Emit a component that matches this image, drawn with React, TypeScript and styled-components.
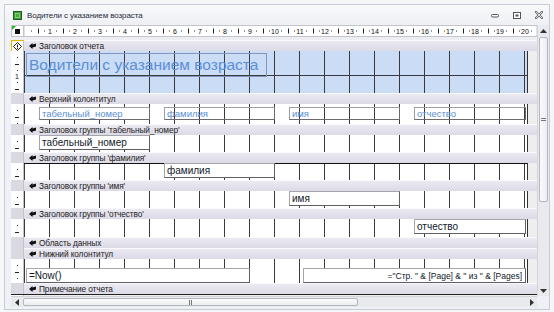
import React from 'react';
import styled, { createGlobalStyle } from 'styled-components';

const GlobalStyle = createGlobalStyle`
  html, body { margin: 0; padding: 0; background: #f5f6f8; }
  body { font-family: "Liberation Sans", Arial, sans-serif; }
  #root { width: 554px; height: 312px; overflow: hidden; }
`;

const Window = styled.div`
  margin: 4px 0 0 4px;
  width: 544px;
  height: 304px;
  border: 1px solid #c6ccd6;
  background: #eef1f5;
  display: grid;
  grid-template-columns: 6px 13px 513px 12px;
  grid-template-rows: 20px 271px 11px 2px;
`;

const TitleBar = styled.div`
  grid-column: 1 / -1;
  display: flex;
  align-items: center;
  padding-left: 8px;
  background: linear-gradient(#f8f9fb, #eef0f4);
`;

const TitleText = styled.span`
  margin-left: 5px;
  font-size: 8px;
  color: #1e2a3a;
  letter-spacing: -0.1px;
`;

const TitleButtons = styled.div`
  margin-left: auto;
  display: flex;
  align-items: center;
  gap: 14px;
  padding-right: 6px;
`;

const Main = styled.div`
  grid-column: 2 / 4;
  grid-row: 2;
  display: flex;
  flex-direction: column;
  overflow: hidden;
`;

const RulerRow = styled.div`
  display: grid;
  grid-template-columns: 13px 513px;
  height: 12px;
`;

const Corner = styled.div`
  position: relative;
  background: #fff;
  border: 1px solid #c4c4cc;
  box-sizing: border-box;
  display: flex;
  align-items: center;
  justify-content: center;
  &::before {
    content: '';
    position: absolute;
    left: 0;
    top: 0;
    border-top: 4px solid #1fb81f;
    border-right: 4px solid transparent;
  }
`;

const CornerSquare = styled.div`
  width: 5px;
  height: 5px;
  background: #111;
`;

const Gap = styled.div`
  height: 3px;
  background: #eceef2;
`;

const BarRow = styled.div`
  display: grid;
  grid-template-columns: 13px 513px;
  height: 11px;
`;

const BarSide = styled.div<{ $selector?: boolean }>`
  background: ${(p) => (p.$selector ? '#fffbe8' : '#d9d9e1')};
  border: ${(p) => (p.$selector ? '1px solid #e8b600' : 'none')};
  border-right: 1px solid #c2c2ca;
  box-sizing: border-box;
  display: flex;
  align-items: center;
  justify-content: center;
`;

const Bar = styled.div<{ $underline?: boolean }>`
  display: flex;
  align-items: center;
  gap: 3px;
  padding-left: 5px;
  box-sizing: border-box;
  background: linear-gradient(#ebe9f1, #dcdae6);
  border-top: 1px solid #fafafc;
  border-bottom: 1px solid ${(p) => (p.$underline ? '#111' : '#c6c4d0')};
  font-size: 8.3px;
  color: #222;
  letter-spacing: -0.1px;
  white-space: nowrap;
`;

const BodyRow = styled.div<{ $h: number }>`
  display: grid;
  grid-template-columns: 13px 504px 9px;
  height: ${(p) => p.$h}px;
`;

const RulerSide = styled.div`
  background: #fff;
  border-right: 1px solid #c2c2ca;
  box-sizing: border-box;
`;

const Canvas = styled.div<{ $tone: 'blue' | 'white'; $topLine?: boolean }>`
  position: relative;
  overflow: hidden;
  background-color: ${(p) => (p.$tone === 'blue' ? '#cadcf6' : '#ffffff')};
  background-image: linear-gradient(90deg, #3a3a3e 1px, transparent 1px),
    linear-gradient(180deg, #3a3a3e 1px, transparent 1px);
  background-size: 25px 25px;
  background-position: 0 -1px;
  box-shadow: ${(p) => (p.$topLine ? 'inset 0 1px 0 #111' : 'none')};
  border-right: 1px solid #333;
  box-sizing: border-box;
`;

const Filler = styled.div`
  background: #eeeeef;
`;

const Tail = styled.div`
  flex: 1;
  display: grid;
  grid-template-columns: 13px 513px;
  border-top: 1px solid #222;
`;

const Placed = styled.div<{ $x: number; $y: number; $w: number; $h: number }>`
  position: absolute;
  left: ${(p) => p.$x}px;
  top: ${(p) => p.$y}px;
  width: ${(p) => p.$w}px;
  height: ${(p) => p.$h}px;
  box-sizing: border-box;
  display: flex;
  align-items: center;
  white-space: nowrap;
  overflow: hidden;
`;

const ReportTitle = styled(Placed)`
  border: 1px solid #7f97bb;
  padding-left: 2px;
  font-size: 15.5px;
  color: #5a8fd6;
`;

const HeaderLabel = styled(Placed)<{ $opaque?: boolean }>`
  border: 1px solid #a0a0a4;
  border-right-color: #6a6a6e;
  border-bottom-color: #6a6a6e;
  background: ${(p) => (p.$opaque ? '#fff' : 'transparent')};
  padding-left: 2px;
  font-size: 9.5px;
  color: #5a8fd6;
`;

const FieldBox = styled(Placed)<{ $align?: 'left' | 'right' }>`
  border: 1px solid #a6a6aa;
  border-right-color: #606064;
  border-bottom-color: #606064;
  background: #fff;
  padding: 0 3px 0 2px;
  justify-content: ${(p) => (p.$align === 'right' ? 'flex-end' : 'flex-start')};
  font-size: 10px;
  color: #101828;
`;

const SmallText = styled.span`
  font-size: 8.5px;
`;

const VScroll = styled.div`
  grid-column: 4;
  grid-row: 2;
  display: flex;
  flex-direction: column;
  background: #e9eaed;
  border-left: 1px solid #d2d4d8;
`;

const HScroll = styled.div`
  grid-column: 2 / 4;
  grid-row: 3;
  display: flex;
  align-items: stretch;
  background: #e9eaed;
  border-top: 1px solid #d2d4d8;
`;

const ScrollCorner = styled.div`
  grid-column: 4;
  grid-row: 3;
  background: #eef1f5;
`;

const Arrow = styled.div<{ $vertical?: boolean }>`
  flex: none;
  width: ${(p) => (p.$vertical ? 'auto' : '11px')};
  height: ${(p) => (p.$vertical ? '11px' : 'auto')};
  display: flex;
  align-items: center;
  justify-content: center;
`;

const Thumb = styled.div<{ $vertical?: boolean }>`
  flex: none;
  ${(p) => (p.$vertical ? 'height: 163px; margin: 1px 1px 0;' : 'width: 333px; margin: 1px 0 1px 1px;')}
  background: linear-gradient(${(p) => (p.$vertical ? '90deg' : '180deg')}, #fbfbfc, #ecedf0);
  border: 1px solid #b2b6be;
  border-radius: 2px;
  display: flex;
  align-items: center;
  justify-content: center;
`;

const Spacer = styled.div`
  flex: 1;
`;

function HRuler() {
  const marks = [];
  for (let k = 1; k * 6.25 < 512; k++) {
    const x = 1 + k * 6.25;
    if (k % 4 === 0) {
      marks.push(
        <text key={k} x={x} y={9} fontSize={7} textAnchor="middle" fill="#111" fontFamily="Liberation Sans, sans-serif">
          {k / 4}
        </text>
      );
    } else if (k % 2 === 0) {
      marks.push(<rect key={k} x={Math.round(x)} y={3.5} width={1} height={5} fill="#222" />);
    } else {
      marks.push(<rect key={k} x={Math.round(x)} y={5.5} width={1} height={1} fill="#333" />);
    }
  }
  return (
    <svg width={513} height={12} style={{ display: 'block' }}>
      <rect x={0} y={0} width={513} height={12} fill="#fff" />
      <rect x={0} y={0.5} width={513} height={11} fill="none" stroke="#c4c4cc" />
      {marks}
    </svg>
  );
}

function VRuler({ h }: { h: number }) {
  const marks = [];
  for (let k = 1; k * 6.25 < h; k++) {
    const y = k * 6.25;
    if (k % 4 === 0) {
      marks.push(
        <text key={k} x={6} y={y + 2.5} fontSize={7} textAnchor="middle" fill="#111" fontFamily="Liberation Sans, sans-serif">
          {k / 4}
        </text>
      );
    } else if (k % 2 === 0) {
      marks.push(<rect key={k} x={4} y={Math.round(y)} width={4} height={1} fill="#222" />);
    } else {
      marks.push(<rect key={k} x={6} y={Math.round(y)} width={1} height={1} fill="#333" />);
    }
  }
  return (
    <svg width={12} height={h} style={{ display: 'block' }}>
      {marks}
    </svg>
  );
}

function BarIcon() {
  return (
    <svg width={7} height={6} viewBox="0 0 7 6">
      <path d="M0 3 L3.5 0 L3.5 1.6 L7 0.6 L7 3.4 L3.5 4.4 L3.5 6 Z" fill="#111" />
    </svg>
  );
}

function SelectorIcon() {
  return (
    <svg width={9} height={9} viewBox="0 0 9 9">
      <path d="M4.5 0.5 L8.5 4.5 L4.5 8.5 L0.5 4.5 Z" fill="#fff" stroke="#222" strokeWidth={1} />
      <rect x={4} y={2.5} width={1} height={3} fill="#222" />
      <rect x={4} y={6} width={1} height={1} fill="#222" />
    </svg>
  );
}

function AppIcon() {
  return (
    <svg width={9} height={9} viewBox="0 0 9 9">
      <rect x={0.5} y={0.5} width={8} height={8} fill="#3e9a3a" stroke="#1f5e1c" />
      <rect x={2} y={2} width={5} height={5} fill="#7ccf6c" />
      <rect x={3} y={3} width={3} height={3} fill="#4aa844" />
    </svg>
  );
}

function WinButtons() {
  return (
    <TitleButtons>
      <svg width={8} height={5} viewBox="0 0 8 5">
        <rect x={0.5} y={1.5} width={7} height={2.5} rx={1} fill="#fff" stroke="#555" />
      </svg>
      <svg width={8} height={7} viewBox="0 0 8 7">
        <rect x={0.5} y={0.5} width={7} height={6} fill="#fff" stroke="#555" />
        <rect x={2.5} y={2.5} width={3} height={2} fill="#555" />
      </svg>
      <svg width={8} height={8} viewBox="0 0 8 8">
        <path d="M1 1 L7 7 M7 1 L1 7" stroke="#666" strokeWidth={2.2} strokeLinecap="square" />
        <path d="M1 1 L7 7 M7 1 L1 7" stroke="#fff" strokeWidth={0.8} />
      </svg>
    </TitleButtons>
  );
}

type SectionProps = {
  title: string;
  h: number;
  tone?: 'blue' | 'white';
  selector?: boolean;
  underline?: boolean;
  children?: React.ReactNode;
};

function Section({ title, h, tone = 'white', selector, underline, children }: SectionProps) {
  return (
    <>
      <BarRow>
        <BarSide $selector={selector}>{selector && <SelectorIcon />}</BarSide>
        <Bar $underline={underline}>
          <BarIcon />
          {title}
        </Bar>
      </BarRow>
      {h > 0 && (
        <BodyRow $h={h}>
          <RulerSide>
            <VRuler h={h} />
          </RulerSide>
          <Canvas $tone={tone} $topLine={underline}>
            {children}
          </Canvas>
          <Filler />
        </BodyRow>
      )}
    </>
  );
}

function Triangle({ dir }: { dir: 'up' | 'down' | 'left' | 'right' }) {
  const d = {
    up: 'M0 4 L3.5 0 L7 4 Z',
    down: 'M0 0 L3.5 4 L7 0 Z',
    left: 'M4 0 L0 3.5 L4 7 Z',
    right: 'M0 0 L4 3.5 L0 7 Z',
  }[dir];
  const vertical = dir === 'up' || dir === 'down';
  return (
    <svg width={vertical ? 7 : 4} height={vertical ? 4 : 7} viewBox={vertical ? '0 0 7 4' : '0 0 4 7'}>
      <path d={d} fill="#333" />
    </svg>
  );
}

export default function App() {
  return (
    <>
      <GlobalStyle />
      <Window>
        <TitleBar>
          <AppIcon />
          <TitleText>Водители с указанием возраста</TitleText>
          <WinButtons />
        </TitleBar>

        <Main>
          <RulerRow>
            <Corner>
              <CornerSquare />
            </Corner>
            <HRuler />
          </RulerRow>
          <Gap />

          <Section title="Заголовок отчета" h={42} tone="blue" selector>
            <ReportTitle $x={2} $y={2} $w={241} $h={24}>
              Водители с указанием возраста
            </ReportTitle>
          </Section>

          <Section title="Верхний колонтитул" h={20}>
            <HeaderLabel $x={15} $y={3} $w={111} $h={13} $opaque>
              табельный_номер
            </HeaderLabel>
            <HeaderLabel $x={140} $y={3} $w={111} $h={13}>
              фамилия
            </HeaderLabel>
            <HeaderLabel $x={265} $y={3} $w={111} $h={13}>
              имя
            </HeaderLabel>
            <HeaderLabel $x={390} $y={3} $w={112} $h={13}>
              отчество
            </HeaderLabel>
          </Section>

          <Section title="Заголовок группы 'табельный_номер'" h={17}>
            <FieldBox $x={15} $y={0} $w={111} $h={15}>
              табельный_номер
            </FieldBox>
          </Section>

          <Section title="Заголовок группы 'фамилия'" h={17} underline>
            <FieldBox $x={140} $y={0} $w={111} $h={15}>
              фамилия
            </FieldBox>
          </Section>

          <Section title="Заголовок группы 'имя'" h={17}>
            <FieldBox $x={265} $y={0} $w={111} $h={15}>
              имя
            </FieldBox>
          </Section>

          <Section title="Заголовок группы 'отчество'" h={18}>
            <FieldBox $x={390} $y={0} $w={112} $h={15}>
              отчество
            </FieldBox>
          </Section>

          <Section title="Область данных" h={0} />

          <Section title="Нижний колонтитул" h={24}>
            <FieldBox $x={2} $y={9} $w={224} $h={15}>
              =Now()
            </FieldBox>
            <FieldBox $x={279} $y={9} $w={223} $h={15} $align="right">
              <SmallText>="Стр. " &amp; [Page] &amp; " из " &amp; [Pages]</SmallText>
            </FieldBox>
          </Section>

          <Section title="Примечание отчета" h={0} />
          <Tail>
            <RulerSide />
            <Filler />
          </Tail>
        </Main>

        <VScroll>
          <Arrow $vertical>
            <Triangle dir="up" />
          </Arrow>
          <Thumb $vertical>
            <svg width={5} height={4} viewBox="0 0 5 4">
              <path d="M0 0.5 H5 M0 2.5 H5" stroke="#777" strokeWidth={1} />
            </svg>
          </Thumb>
          <Spacer />
          <Arrow $vertical>
            <Triangle dir="down" />
          </Arrow>
        </VScroll>

        <HScroll>
          <Arrow>
            <Triangle dir="left" />
          </Arrow>
          <Thumb>
            <svg width={4} height={5} viewBox="0 0 4 5">
              <path d="M0.5 0 V5 M2.5 0 V5" stroke="#777" strokeWidth={1} />
            </svg>
          </Thumb>
          <Spacer />
          <Arrow>
            <Triangle dir="right" />
          </Arrow>
        </HScroll>
        <ScrollCorner />
      </Window>
    </>
  );
}
